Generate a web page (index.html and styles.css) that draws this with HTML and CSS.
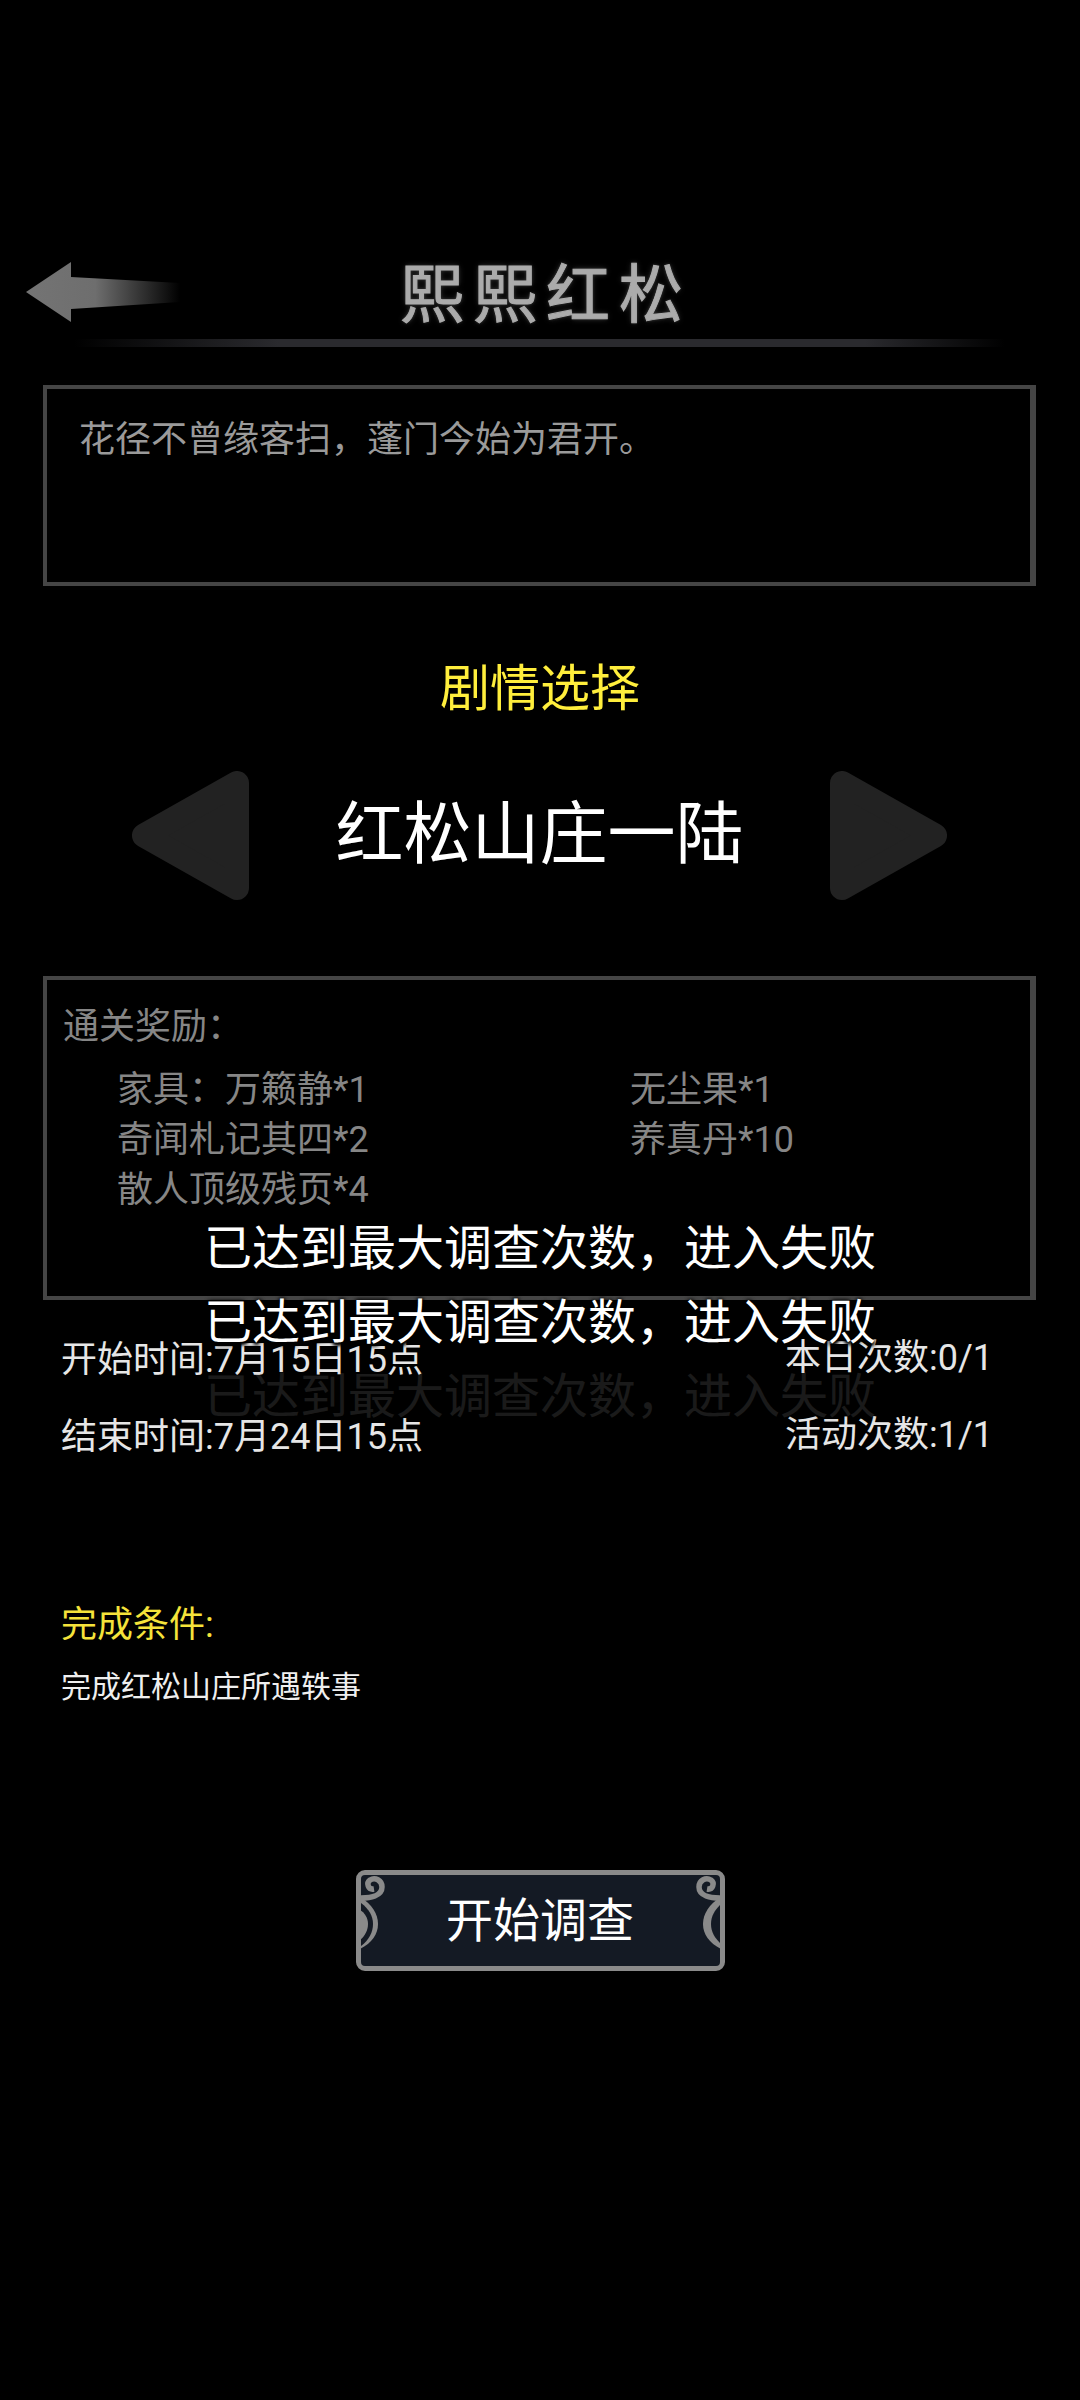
FILE: index.html
```html
<!DOCTYPE html>
<html lang="zh">
<head>
<meta charset="utf-8">
<title>熙熙红松</title>
<link rel="stylesheet" href="styles.css">
</head>
<body>
<div class="page">

  <div class="topbar">
    <svg class="back" width="170" height="80" viewBox="0 0 170 80">
      <defs>
        <linearGradient id="backfade" x1="0" x2="1" y1="0" y2="0">
          <stop offset="0" stop-color="#747474"/>
          <stop offset="0.45" stop-color="#6e6e6e"/>
          <stop offset="1" stop-color="#000"/>
        </linearGradient>
      </defs>
      <path fill="url(#backfade)" d="M6 40 L51 10 L51 25 L160 31 L160 50 L51 57 L51 70 Z"/>
    </svg>
    <div class="title">熙熙红松</div>
  </div>
  <div class="divider"></div>

  <div class="box intro">花径不曾缘客扫，蓬门今始为君开。</div>

  <div class="choose">剧情选择</div>

  <div class="selector">
    <svg class="tri" width="117" height="129" viewBox="0 0 117 129"><polygon points="12,64.5 105,12 105,117"/></svg>
    <div class="stage">红松山庄一陆</div>
    <svg class="tri" width="117" height="129" viewBox="0 0 117 129"><polygon points="105,64.5 12,12 12,117"/></svg>
  </div>

  <div class="box reward">
    <div class="reward-title">通关奖励：</div>
    <div class="reward-list">
      <div>家具：万籁静*1</div><div>无尘果*1</div>
      <div>奇闻札记其四*2</div><div>养真丹*10</div>
      <div>散人顶级残页*4</div>
    </div>
  </div>

  <div class="times">
    <div>开始时间:7月15日15点</div><div class="count">本日次数:0/1</div>
    <div>结束时间:7月24日15点</div><div class="count">活动次数:1/1</div>
  </div>

  <div class="cond-title">完成条件:</div>
  <div class="cond-text">完成红松山庄所遇轶事</div>

  <div class="btn-wrap">
    <div class="start-btn">
      <svg class="orn" width="369" height="101" viewBox="0 0 369 101">
        <g>
          <path class="scroll" d="M5 28 C14 28 26 26 26 17 C26 10 19 7 14 10 C10 13 12 20 18 19"/>
          <path class="fillg" d="M4 27 C16 34 22 44 22 54 C22 64 16 73 4 79 Z"/>
          <path class="filld" d="M5 33 C13 39 17 46 17 54 C17 62 13 70 5 76 Z"/>
          <path class="fillg" d="M4 40 C9 43 12 48 12 54 C12 60 9 66 4 70 Z"/>
        </g>
        <g transform="translate(369 0) scale(-1 1)">
          <path class="scroll" d="M5 28 C14 28 26 26 26 17 C26 10 19 7 14 10 C10 13 12 20 18 19"/>
          <path class="fillg" d="M4 27 C16 34 22 44 22 54 C22 64 16 73 4 79 Z"/>
          <path class="filld" d="M5 35 C10 40 14 46 14 54 C14 62 10 68 5 73 Z"/>
        </g>
      </svg>
      <span class="start-text">开始调查</span>
    </div>
  </div>

  <!-- toast stack, lies over the page -->
  <div class="toasts">
    <div class="toast">已达到最大调查次数，进入失败</div>
    <div class="toast">已达到最大调查次数，进入失败</div>
    <div class="toast faint">已达到最大调查次数，进入失败</div>
  </div>

</div>
</body>
</html>
```

FILE: styles.css
```css
html, body {
  margin: 0;
  padding: 0;
  background: #000;
}
.page {
  position: relative;
  width: 1080px;
  height: 2400px;
  overflow: hidden;
  background: #000;
  font-family: Roboto, "Noto Sans CJK SC", sans-serif;
  color: #fff;
}

/* header */
.topbar {
  position: relative;
  height: 80px;
  margin-top: 252px;
  display: flex;
  justify-content: center;
  align-items: center;
}
.back {
  position: absolute;
  left: 20px;
  top: 0;
}
.title {
  font-size: 64px;
  line-height: 80px;
  letter-spacing: 9px;
  margin: 8px 0 0 12px;
  color: #ababab;
  -webkit-text-stroke: 1px #ababab;
  text-shadow: 0 0 3px #444, 0 0 6px #333;
}
.divider {
  width: 931px;
  height: 8px;
  margin: 7px 0 0 74px;
  background: linear-gradient(90deg, #000 0, #2a2a2e 22%, #2a2a2e 85%, #000 100%);
}

/* boxes */
.box {
  box-sizing: border-box;
  width: 993px;
  margin-left: 43px;
  border: 4px solid #454545;
  border-right-width: 6px;
}
.intro {
  height: 201px;
  margin-top: 38px;
  padding: 26px 0 0 32px;
  font-size: 36px;
  line-height: 50px;
  color: #9a9a9a;
}

/* story picker */
.choose {
  margin-top: 68px;
  text-align: center;
  font-size: 50px;
  line-height: 70px;
  color: #ffee3c;
}
.selector {
  margin: 47px 0 0 132px;
  width: 815px;
  display: flex;
  justify-content: space-between;
  align-items: center;
  height: 129px;
}
.tri polygon {
  fill: #222;
  stroke: #222;
  stroke-width: 24;
  stroke-linejoin: round;
}
.stage {
  font-size: 68px;
  line-height: 90px;
  margin-top: -2px;
}

/* rewards */
.reward {
  height: 324px;
  margin-top: 76px;
  padding: 22px 0 0 16px;
  font-size: 36px;
  line-height: 50px;
  color: #868686;
}
.reward-list {
  margin: 13px 0 0 54px;
  display: grid;
  grid-template-columns: 513px 1fr;
}

/* time window */
.times {
  margin: 35px 87px 0 61px;
  display: grid;
  grid-template-columns: 1fr auto;
  row-gap: 27px;
  font-size: 36px;
  line-height: 50px;
  color: #e6e6e6;
}
.count {
  margin-top: -2px;
}

/* completion */
.cond-title {
  margin: 138px 0 0 61px;
  font-size: 36px;
  line-height: 50px;
  color: #f5e33a;
}
.cond-text {
  margin: 15px 0 0 61px;
  font-size: 30px;
  line-height: 44px;
  color: #efefef;
}

/* start button */
.btn-wrap {
  margin-top: 161px;
  display: flex;
  justify-content: center;
}
.start-btn {
  position: relative;
  box-sizing: border-box;
  width: 369px;
  height: 101px;
  border: 5px solid #8a8a8a;
  border-radius: 9px;
  background: #141a24;
  display: flex;
  align-items: center;
  justify-content: center;
}
.orn {
  position: absolute;
  left: -5px;
  top: -5px;
}
.scroll {
  fill: none;
  stroke: #8a8a8a;
  stroke-width: 5.5;
}
.fillg { fill: #8a8a8a; }
.filld { fill: #141a24; }
.start-text {
  position: relative;
  font-size: 47px;
  line-height: 60px;
}

/* toasts: black edge bites into whatever is under the text */
.toasts {
  position: absolute;
  left: 0;
  right: 0;
  top: 1214px;
  text-align: center;
}
.toast {
  height: 74px;
  font-size: 48px;
  line-height: 70px;
  color: #fff;
  text-shadow: 0 2px 3px #000, 0 3px 4px #000, 0 0 4px #000, 0 0 4px #000;
}
.toast.faint {
  opacity: 0.1;
}
```
